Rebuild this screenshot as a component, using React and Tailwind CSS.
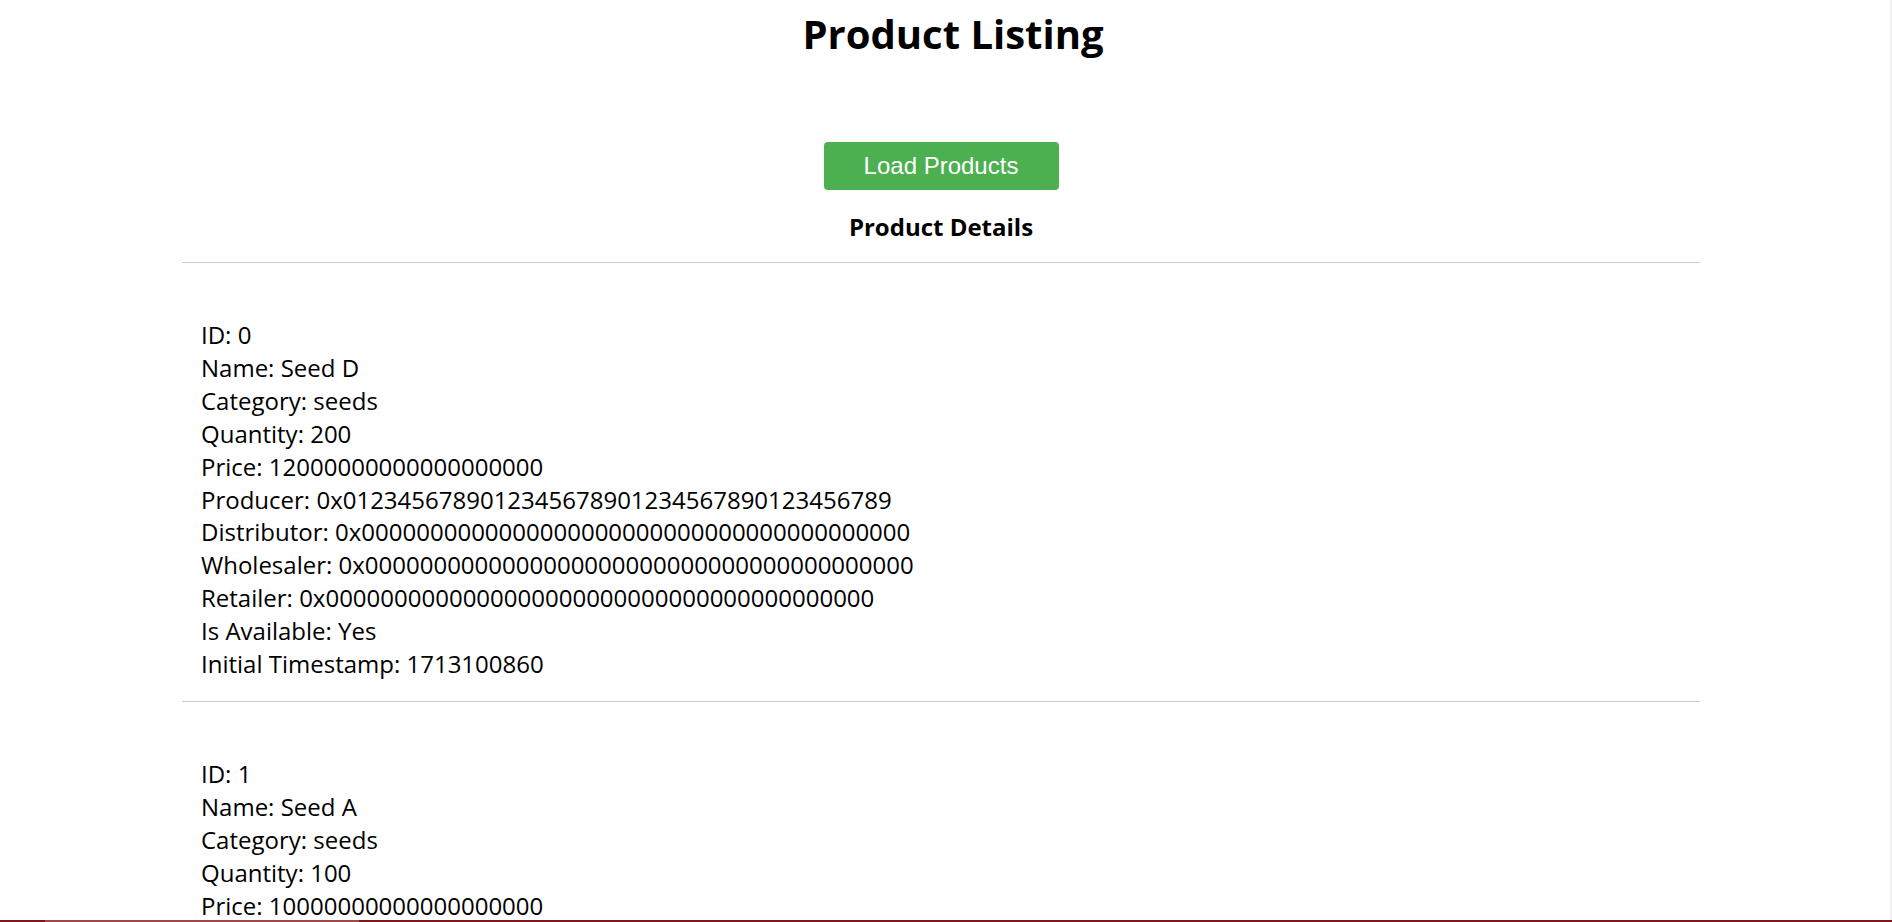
const PRODUCTS = [
  {
    id: 0,
    name: 'Seed D',
    category: 'seeds',
    quantity: 200,
    price: '12000000000000000000',
    producer: '0x0123456789012345678901234567890123456789',
    distributor: '0x0000000000000000000000000000000000000000',
    wholesaler: '0x0000000000000000000000000000000000000000',
    retailer: '0x0000000000000000000000000000000000000000',
    available: true,
    timestamp: 1713100860,
  },
  {
    id: 1,
    name: 'Seed A',
    category: 'seeds',
    quantity: 100,
    price: '10000000000000000000',
    producer: '0x0123456789012345678901234567890123456789',
    distributor: '0x0000000000000000000000000000000000000000',
    wholesaler: '0x0000000000000000000000000000000000000000',
    retailer: '0x0000000000000000000000000000000000000000',
    available: true,
    timestamp: 1713100860,
  },
];

function ProductItem({ p }) {
  return (
    <div className="border-t border-[#cccccc] pt-[56px] pb-[20px] px-[19px] leading-[32.9px]">
      <div>ID: {p.id}</div>
      <div>Name: {p.name}</div>
      <div>Category: {p.category}</div>
      <div>Quantity: {p.quantity}</div>
      <div>Price: {p.price}</div>
      <div>Producer: {p.producer}</div>
      <div>Distributor: {p.distributor}</div>
      <div>Wholesaler: {p.wholesaler}</div>
      <div>Retailer: {p.retailer}</div>
      <div>Is Available: {p.available ? 'Yes' : 'No'}</div>
      <div>Initial Timestamp: {p.timestamp}</div>
    </div>
  );
}

export default function App() {
  return (
    <div className="min-h-screen bg-white text-black font-['Open_Sans',sans-serif] text-[24px] leading-normal pr-[10px]">
      <h1 className="pt-[4px] pl-[24px] text-center text-[40px] font-bold leading-normal">Product Listing</h1>

      <div className="mt-[78px] flex justify-center">
        <button className="h-[48px] w-[235px] rounded-[4px] bg-[#4caf50] text-white font-['Liberation_Sans',Arial,sans-serif] text-[24px]">
          Load Products
        </button>
      </div>

      <h3 className="mt-[19px] text-center font-bold">Product Details</h3>

      <div className="mx-auto mt-[17px] w-[1518px]">
        {PRODUCTS.map((p) => (
          <ProductItem key={p.id} p={p} />
        ))}
      </div>

      {/* window edge + taskbar strip */}
      <div className="fixed right-0 top-0 h-screen w-[2px] bg-[#f0f0f0]" />
      <div className="fixed bottom-0 left-0 flex h-[2px] w-full bg-[#7a1a1a]">
        <div className="ml-[45px] w-[314px] bg-[#a04848]" />
      </div>
    </div>
  );
}
